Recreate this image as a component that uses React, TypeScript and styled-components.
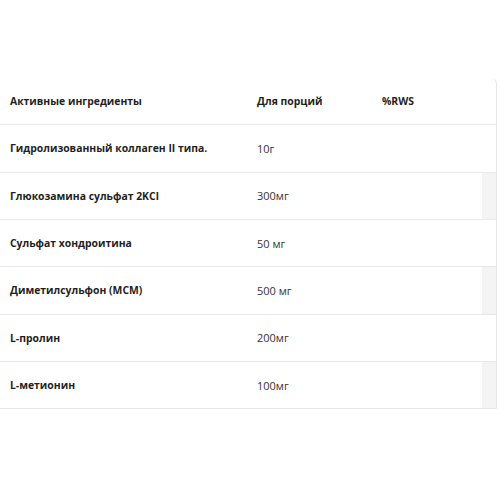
import React from "react";
import styled, { createGlobalStyle } from "styled-components";

const Global = createGlobalStyle`
  html, body { margin: 0; padding: 0; background: #fff; }
  body { font-family: "Open Sans", "Noto Sans", sans-serif; }
`;

const Page = styled.div`
  width: 500px;
  height: 500px;
  padding-top: 78px;
  box-sizing: border-box;
`;

const Table = styled.div`
  width: 497px;
  display: flex;
  flex-direction: column;
  border-right: 1px solid #e6e6e6;
  border-top-right-radius: 6px;
  box-sizing: border-box;
`;

const Row = styled.div<{ $shade?: boolean }>`
  display: grid;
  grid-template-columns: 257px 125px 1fr 14px;
  height: 47.33px;
  align-items: center;
  border-bottom: 1px solid #e8e8e8;
  box-sizing: border-box;
  & > :last-child {
    align-self: stretch;
    background: ${(p) => (p.$shade ? "#f4f4f5" : "transparent")};
  }
`;

const HeadCell = styled.div<{ $first?: boolean }>`
  font-size: 10.4px;
  font-weight: 700;
  color: #1f1f1f;
  padding-left: ${(p) => (p.$first ? "10px" : "0")};
  white-space: nowrap;
`;

const NameCell = styled.div`
  font-size: 10.4px;
  font-weight: 700;
  color: #1f1f1f;
  padding-left: 10px;
  white-space: nowrap;
`;

const ValueCell = styled.div`
  font-size: 11px;
  font-weight: 400;
  color: #333;
  white-space: nowrap;
`;

const Edge = styled.div``;

const rows: [string, string][] = [
  ["Гидролизованный коллаген II типа.", "10г"],
  ["Глюкозамина сульфат 2KCl", "300мг"],
  ["Сульфат хондроитина", "50 мг"],
  ["Диметилсульфон (MCM)", "500 мг"],
  ["L-пролин", "200мг"],
  ["L-метионин", "100мг"],
];

export default function App() {
  return (
    <>
      <Global />
      <Page>
        <Table>
          <Row>
            <HeadCell $first>Активные ингредиенты</HeadCell>
            <HeadCell>Для порций</HeadCell>
            <HeadCell>%RWS</HeadCell>
            <Edge />
          </Row>
          {rows.map(([n, v], i) => (
            <Row key={n} $shade={i % 2 === 1}>
              <NameCell>{n}</NameCell>
              <ValueCell>{v}</ValueCell>
              <ValueCell />
              <Edge />
            </Row>
          ))}
        </Table>
      </Page>
    </>
  );
}
